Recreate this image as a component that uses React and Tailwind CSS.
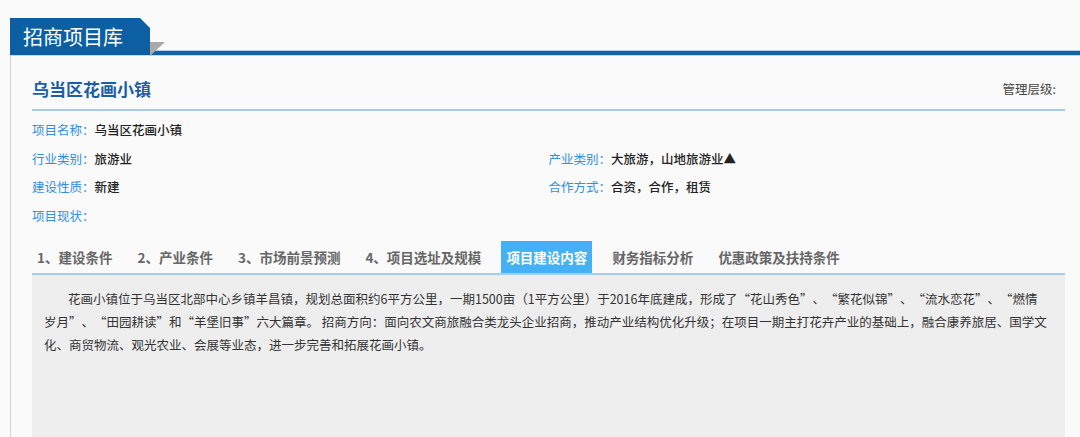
import React from "react";

const tabs = [
  "1、建设条件",
  "2、产业条件",
  "3、市场前景预测",
  "4、项目选址及规模",
  "项目建设内容",
  "财务指标分析",
  "优惠政策及扶持条件",
];

function Field({ label, value }) {
  return (
    <div className="h-[28.5px] leading-[28.5px] whitespace-nowrap">
      <span className="text-[#2f8fe3]">{label}</span>
      <span className="text-[#222] font-medium">{value}</span>
    </div>
  );
}

export default function App() {
  return (
    <div className="h-[437px] overflow-hidden bg-[#fafafa] flex flex-col font-['Noto_Sans_CJK_SC','Microsoft_YaHei',sans-serif] text-[12.5px] [text-spacing-trim:space-all]">
      {/* header */}
      <div className="pt-[18px] pl-[10px] flex">
        <div className="w-[140px] h-[37px] bg-[#0b5fa2] [clip-path:polygon(0_0,130px_0,140px_10px,140px_100%,0_100%)] pl-[13px] text-[20px] leading-[37px] text-white whitespace-nowrap">
          招商项目库
        </div>
        <div className="flex-1 relative flex flex-col justify-end">
          <div className="h-px bg-[#b7cfe4]"></div>
          <div className="h-[4px] bg-[#0f62a4]"></div>
          <svg className="absolute left-0 top-[24px]" width="15" height="14" viewBox="0 0 15 14">
            <polygon points="0,0 15,0 0,14" fill="#a9a9a9" />
          </svg>
        </div>
      </div>

      {/* card */}
      <div className="ml-[10px] flex-1 flex flex-col border-l border-t border-[#d4d4d4] bg-[#fafafa] pl-[21px] pr-[15px]">
        <div className="flex justify-between items-center pt-[21px] pb-[8px] border-b-2 border-[#a6cbed]">
          <div className="text-[17px] leading-[24px] font-bold text-[#1c5ea3]">乌当区花画小镇</div>
          <div className="pr-[9px] text-[#444] leading-[24px]">管理层级:</div>
        </div>

        <div className="pt-[5px] grid grid-cols-2">
          <Field label="项目名称：" value="乌当区花画小镇" />
          <div></div>
          <Field label="行业类别：" value="旅游业" />
          <Field label="产业类别：" value="大旅游，山地旅游业▲" />
          <Field label="建设性质：" value="新建" />
          <Field label="合作方式：" value="合资，合作，租赁" />
          <Field label="项目现状：" value="" />
          <div></div>
        </div>

        <div className="mt-[11px] flex gap-[15px] h-[32px] border-b-2 border-[#a6cdee] box-content">
          {tabs.map((t, i) =>
            i === 4 ? (
              <div key={t} className="px-[5px] leading-[32px] text-[13.5px] font-bold text-white bg-[#45b1f5] whitespace-nowrap">
                {t}
              </div>
            ) : (
              <div key={t} className="px-[5px] leading-[32px] text-[13.5px] font-bold text-[#666] whitespace-nowrap">
                {t}
              </div>
            )
          )}
        </div>

        <div className="flex-1 bg-[#eeeeee] pt-[12px] px-[12px] text-[#333] leading-[23px]">
          <div className="whitespace-nowrap pl-[24px]">
            花画小镇位于乌当区北部中心乡镇羊昌镇，规划总面积约6平方公里，一期1500亩（1平方公里）于2016年底建成，形成了“花山秀色”、“繁花似锦”、“流水恋花”、“燃情
          </div>
          <div className="whitespace-nowrap">
            岁月”、“田园耕读”和“羊堡旧事”六大篇章。 招商方向：面向农文商旅融合类龙头企业招商，推动产业结构优化升级；在项目一期主打花卉产业的基础上，融合康养旅居、国学文
          </div>
          <div className="whitespace-nowrap">
            化、商贸物流、观光农业、会展等业态，进一步完善和拓展花画小镇。
          </div>
        </div>
      </div>
    </div>
  );
}
